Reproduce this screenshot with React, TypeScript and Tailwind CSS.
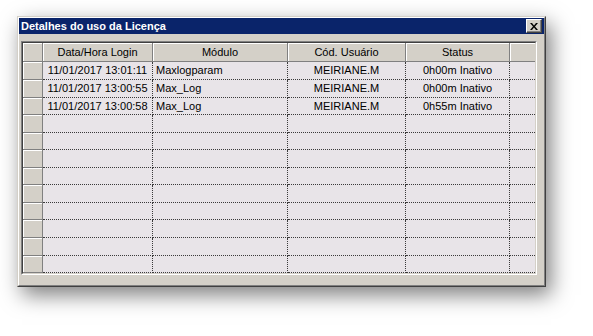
import React from "react";

// Janela "Detalhes do uso da Licença" — grade estilo Delphi/Win2000

type Col = { w: string; title: string; cell: string; line: boolean };

const COLS: Col[] = [
  { w: "w-[110px]", title: "Data/Hora Login", cell: "justify-center", line: true },
  { w: "w-[135px]", title: "Módulo", cell: "justify-start pl-[3px]", line: true },
  { w: "w-[118px]", title: "Cód. Usuário", cell: "justify-center", line: true },
  { w: "w-[104px]", title: "Status", cell: "justify-center", line: true },
  { w: "w-[25px]", title: "", cell: "justify-center", line: false },
];

const LINHAS: string[][] = [
  ["11/01/2017 13:01:11", "Maxlogparam", "MEIRIANE.M", "0h00m Inativo", ""],
  ["11/01/2017 13:00:55", "Max_Log", "MEIRIANE.M", "0h00m Inativo", ""],
  ["11/01/2017 13:00:58", "Max_Log", "MEIRIANE.M", "0h55m Inativo", ""],
];

// alturas alternadas para reproduzir a grade (≈17,5px por linha)
const ALTURAS = [18, 18, 17, 18, 17, 18, 17, 18, 17, 18, 18, 17];

function Linha({ valores, alta }: { valores: string[]; alta: boolean }) {
  return (
    <div className={`flex ${alta ? "h-[18px]" : "h-[17px]"}`}>
      <div className="w-[20px] shrink-0 border-r border-b border-[#808080] bg-[#d4d0c8] shadow-[inset_1px_1px_0_#fff]" />
      {COLS.map((c, i) => (
        <div
          key={i}
          className={`${c.w} flex shrink-0 items-center whitespace-nowrap border-b border-dotted border-[#3a3a3a] ${
            c.line ? "border-r" : ""
          } ${c.cell}`}
        >
          {valores[i]}
        </div>
      ))}
    </div>
  );
}

export default function App() {
  const linhas = ALTURAS.map((h, i) => ({ alta: h === 18, valores: LINHAS[i] ?? ["", "", "", "", ""] }));

  return (
    <div className="min-h-[336px] w-[593px] bg-white pl-[17px] pt-[16px] font-['Liberation_Sans',Arial,sans-serif] text-[11px] text-black">
      <div className="w-[529px] border-2 border-t-[#d4d0c8] border-l-[#d4d0c8] border-r-[#404040] border-b-[#404040] bg-[#d4d0c8] shadow-[5px_8px_20px_rgba(0,0,0,0.5)]">
        <div className="border border-t-white border-l-white border-r-[#808080] border-b-[#808080] -m-px">
          {/* barra de título */}
          <div className="flex h-[16px] items-center justify-between bg-[#0a246a] pl-[2px] pr-[2px]">
            <span className="text-[11px] font-bold leading-none text-white">Detalhes do uso da Licença</span>
            <button className="flex h-[14px] w-[16px] items-center justify-center border border-t-white border-l-white border-r-[#404040] border-b-[#404040] bg-[#d4d0c8] shadow-[inset_-1px_-1px_0_#808080]">
              <svg width="8" height="7" viewBox="0 0 8 7">
                <path d="M0 0h2l2 2.5L6 0h2L5 3.5 8 7H6L4 4.5 2 7H0l3-3.5z" fill="#000" />
              </svg>
            </button>
          </div>

          {/* corpo */}
          <div className="pb-[10px] pl-[2px] pr-[5px] pt-[7px]">
            <div className="w-[516px] border-2 border-t-[#808080] border-l-[#808080] border-r-white border-b-white bg-[#e8e4e8]">
              <div className="border border-t-[#404040] border-l-[#404040] border-r-[#d4d0c8] border-b-[#d4d0c8] -m-px">
                {/* cabeçalho */}
                <div className="flex h-[19px]">
                  <div className="w-[20px] shrink-0 border-r border-b border-[#808080] bg-[#d4d0c8] shadow-[inset_1px_1px_0_#fff]" />
                  {COLS.map((c, i) => (
                    <div
                      key={i}
                      className={`${c.w} flex shrink-0 items-center justify-center border-b border-[#808080] bg-[#d4d0c8] shadow-[inset_1px_1px_0_#fff] ${
                        c.line ? "border-r" : ""
                      }`}
                    >
                      {c.title}
                    </div>
                  ))}
                </div>
                {linhas.map((l, i) => (
                  <Linha key={i} valores={l.valores} alta={l.alta} />
                ))}
              </div>
            </div>
          </div>
        </div>
      </div>
    </div>
  );
}
